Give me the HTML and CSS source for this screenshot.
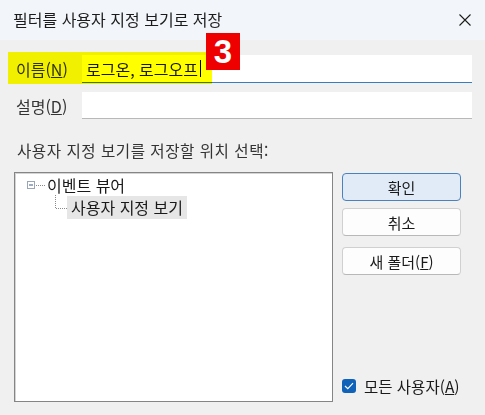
FILE: index.html
```html
<!DOCTYPE html>
<html lang="ko">
<head>
<meta charset="UTF-8">
<title>필터를 사용자 지정 보기로 저장</title>
<link rel="stylesheet" href="styles.css">
</head>
<body>

<div class="titlebar">
    <span class="title">필터를 사용자 지정 보기로 저장</span>
    <svg class="close" width="12" height="12" viewBox="0 0 12 12">
        <path d="M0.5 0.5 L11.5 11.5 M11.5 0.5 L0.5 11.5" stroke="#1b1b1b" stroke-width="1.1" fill="none"/>
    </svg>
</div>

<div class="content">
    <!-- highlighter mark and step badge from the tutorial -->
    <div class="highlight"></div>
    <div class="badge">3</div>

    <div class="field">
        <label>이름(<u>N</u>)</label>
        <div class="box focused">로그온, 로그오프<span class="caret"></span></div>
    </div>
    <div class="field">
        <label>설명(<u>D</u>)</label>
        <div class="box"></div>
    </div>

    <p class="caption">사용자 지정 보기를 저장할 위치 선택:</p>

    <div class="pane">
        <div class="tree">
            <div class="node">
                <svg class="toggle" width="19" height="9" viewBox="0 0 19 9">
                    <rect x="0.5" y="0.5" width="7" height="7" fill="#fff" stroke="#9aa6b8"/>
                    <path d="M2 4 H6" stroke="#3d5a85"/>
                    <path d="M9 4.5 H19" stroke="#8a8a8a" stroke-dasharray="1 1"/>
                </svg>
                <span>이벤트 뷰어</span>
            </div>
            <div class="node child">
                <svg class="elbow" width="12" height="14" viewBox="0 0 12 14">
                    <path d="M0.5 0 V13.5 H12" stroke="#8a8a8a" stroke-dasharray="1 1" fill="none"/>
                </svg>
                <span class="selected">사용자 지정 보기</span>
            </div>
        </div>

        <div class="side">
            <button class="primary">확인</button>
            <button>취소</button>
            <button class="folder">새 폴더(<u>F</u>)</button>
            <label class="check">
                <span class="checkbox">
                    <svg width="10" height="8" viewBox="0 0 10 8">
                        <path d="M1 4 L3.8 6.6 L9 1.2" stroke="#fff" stroke-width="1.2" fill="none"/>
                    </svg>
                </span>
                <span class="check-text">모든 사용자(<u>A</u>)</span>
            </label>
        </div>
    </div>
</div>

</body>
</html>
```

FILE: styles.css
```css
body {
    margin: 0;
    width: 485px;
    height: 415px;
    overflow: hidden;
    background-color: #f0f0f0;
    font-family: "Noto Sans CJK KR", sans-serif;
    font-size: 16px;
    color: #1a1a1a;
}

.titlebar {
    height: 40px;
    box-sizing: border-box;
    padding: 0 14px 0 13px;
    background-color: #f2f5f9;
    display: flex;
    align-items: center;
    justify-content: space-between;
}

.title {
    font-size: 16px;
    color: #1b1b1b;
    margin-top: -3px;
}

.close {
    margin-top: -1px;
}

.content {
    position: relative;
    padding: 15px 13px 0 14px;
}

.highlight {
    position: absolute;
    left: 8px;
    top: 12px;
    width: 204px;
    height: 32px;
    background-color: #ffff00;
    mix-blend-mode: multiply;
    z-index: 2;
}

.badge {
    position: absolute;
    left: 206px;
    top: -7px;
    width: 34px;
    height: 37px;
    background-color: #ee0000;
    color: #fff;
    font-family: "Liberation Sans", Arial, sans-serif;
    font-weight: bold;
    font-size: 33px;
    line-height: 37px;
    text-align: center;
    z-index: 3;
}

.field {
    display: flex;
    align-items: center;
    margin-bottom: 9px;
}

.field label {
    width: 68px;
    padding-left: 2px;
    box-sizing: border-box;
    color: #333;
}

.box {
    width: 390px;
    height: 27px;
    box-sizing: border-box;
    background-color: #fff;
    border-bottom: 1px solid #b8b8b8;
    padding-left: 4px;
    display: flex;
    align-items: center;
}

.box.focused {
    height: 28px;
    border-bottom: 1px solid #3a7cc2;
}

.caret {
    display: inline-block;
    width: 1px;
    height: 17px;
    margin-left: 2px;
    background-color: #000;
}

.caption {
    margin: 21px 0 0 3px;
    line-height: 20px;
    font-size: 15.6px;
    letter-spacing: 0.5px;
    color: #333;
}

.pane {
    display: flex;
    gap: 9px;
    margin-top: 12px;
}

.tree {
    width: 319px;
    height: 230px;
    box-sizing: border-box;
    background-color: #fff;
    border: 1px solid #858585;
    box-shadow: inset 1px 1px 0 #d4d4d4;
    padding-top: 1px;
}

.node {
    display: flex;
    align-items: center;
    height: 22px;
    padding-left: 12px;
}

.toggle {
    margin-right: 1px;
    margin-top: 1px;
}

.node.child {
    height: 23px;
    align-items: flex-end;
    padding-left: 40px;
}

.elbow {
    margin-bottom: 10px;
}

.selected {
    background-color: #e6e6e6;
    padding: 0 4px;
    line-height: 23px;
}

.side {
    width: 119px;
    display: flex;
    flex-direction: column;
    padding-top: 1px;
}

button {
    height: 28px;
    margin-bottom: 7px;
    background-color: #fdfdfd;
    border: 1px solid #d0d0d0;
    border-bottom-color: #b8b8b8;
    border-radius: 4px;
    font-family: inherit;
    font-size: 15px;
    color: #1a1a1a;
    padding: 0;
}

button.primary {
    background-color: #e0ebf7;
    border: 1px solid #4a82c0;
}

button.folder {
    margin-top: 4px;
}

.check {
    margin-top: auto;
    margin-bottom: 5px;
    display: flex;
    align-items: center;
    gap: 8px;
    white-space: nowrap;
}

.check-text {
    font-size: 15.5px;
}

.checkbox {
    flex: none;
    width: 14px;
    height: 14px;
    border-radius: 3px;
    background-color: #0f62b8;
    display: flex;
    align-items: center;
    justify-content: center;
}
```
